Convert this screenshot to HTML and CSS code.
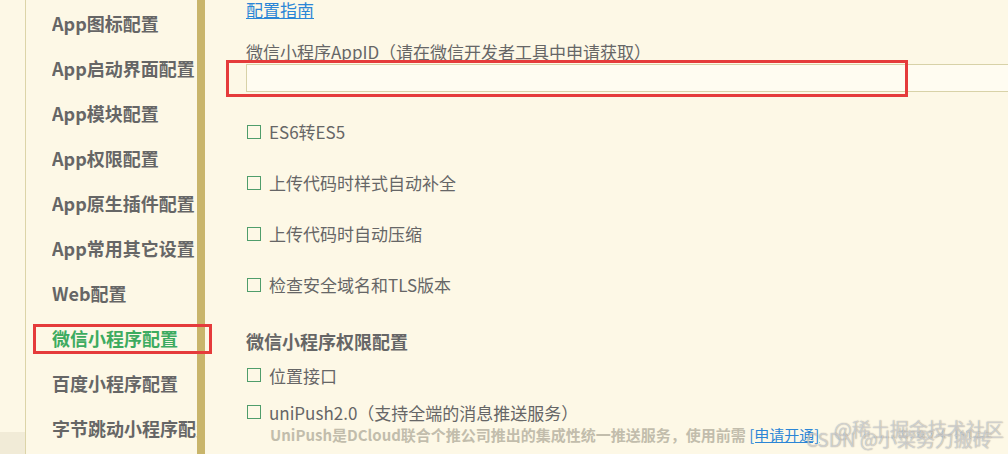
FILE: index.html
```html
<!DOCTYPE html>
<html lang="zh">
<head>
    <meta charset="UTF-8">
    <meta name="viewport" content="width=device-width, initial-scale=1.0">
    <title>manifest.json - 微信小程序配置</title>
    <link rel="stylesheet" href="styles.css">
</head>
<body>
    <div class="page">
        <div class="gutter">
            <div class="gutter-foot"></div>
        </div>

        <nav class="sidebar">
            <div class="nav-item"><span class="nav-text">App图标配置</span></div>
            <div class="nav-item"><span class="nav-text">App启动界面配置</span></div>
            <div class="nav-item"><span class="nav-text">App模块配置</span></div>
            <div class="nav-item"><span class="nav-text">App权限配置</span></div>
            <div class="nav-item"><span class="nav-text">App原生插件配置</span></div>
            <div class="nav-item"><span class="nav-text">App常用其它设置</span></div>
            <div class="nav-item"><span class="nav-text">Web配置</span></div>
            <div class="nav-item active"><span class="nav-text">微信小程序配置</span></div>
            <div class="nav-item"><span class="nav-text">百度小程序配置</span></div>
            <div class="nav-item"><span class="nav-text">字节跳动小程序配置</span></div>
        </nav>

        <main class="content">
            <a class="guide" href="#">配置指南</a>
            <div class="field-label">微信小程序AppID（请在微信开发者工具中申请获取）</div>
            <div class="field">
                <input class="text-input" type="text">
            </div>

            <ul class="options">
                <li class="option"><span class="box"></span>ES6转ES5</li>
                <li class="option"><span class="box"></span>上传代码时样式自动补全</li>
                <li class="option"><span class="box"></span>上传代码时自动压缩</li>
                <li class="option"><span class="box"></span>检查安全域名和TLS版本</li>
            </ul>

            <h3 class="section-title">微信小程序权限配置</h3>
            <div class="perm"><span class="box"></span>位置接口</div>
            <div class="perm"><span class="box"></span>uniPush2.0（支持全端的消息推送服务）</div>
            <div class="perm-desc">UniPush是DCloud联合个推公司推出的集成性统一推送服务，使用前需 <a href="#">[申请开通]</a></div>
        </main>

        <div class="watermark mark-juejin">@稀土掘金技术社区</div>
        <div class="watermark mark-csdn">CSDN @小菜努力搬砖</div>
    </div>
</body>
</html>
```

FILE: styles.css
```css
body {
    margin: 0;
    font-family: "Noto Sans CJK SC", "Noto Sans", sans-serif;
    background-color: #fdf8e6;
    color: #666;
}

.page {
    position: relative;
    display: flex;
    height: 454px;
    overflow: hidden;
}

.gutter {
    width: 25px;
    display: flex;
    flex-direction: column;
    justify-content: flex-end;
}

.gutter-foot {
    height: 22px;
    background-color: #f1ebd7;
}

.sidebar {
    width: 171px;
    flex-shrink: 0;
    border-left: 1px solid #dcd4a8;
    border-right: 8px solid #c9b56b;
    padding-top: 1px;
}

.nav-item {
    position: relative;
    padding-left: 26px;
    height: 45px;
    line-height: 45px;
    font-size: 18px;
    font-weight: bold;
    color: #666;
}

.nav-text {
    display: block;
    overflow: hidden;
    white-space: nowrap;
}

.nav-item.active {
    color: #3dab60;
}

.nav-item.active::after {
    content: "";
    position: absolute;
    left: 7px;
    top: 8px;
    width: 173px;
    height: 24px;
    border: 3px solid #e53b3b;
}

.content {
    flex: 1;
    padding-left: 41px;
    font-size: 17px;
}

.guide {
    display: block;
    line-height: 20px;
    color: #2b86d6;
    text-decoration: underline;
}

.field-label {
    margin-top: 22px;
    line-height: 20px;
}

.field {
    position: relative;
    margin-top: 2px;
}

.field::after {
    content: "";
    position: absolute;
    left: -20px;
    top: -4px;
    width: 676px;
    height: 31px;
    border: 3px solid #e53b3b;
}

.text-input {
    display: block;
    box-sizing: border-box;
    width: 100%;
    height: 28px;
    border: 1px solid #d8d2a8;
    border-right: none;
    background-color: #fffcf1;
    outline: none;
}

.options {
    list-style: none;
    margin: 14px 0 0;
    padding: 0;
}

.option,
.perm {
    display: flex;
    align-items: center;
    padding-left: 1px;
}

.option {
    height: 51px;
}

.box {
    width: 12px;
    height: 12px;
    border: 1px solid #4f9d6b;
    margin-right: 8px;
    flex-shrink: 0;
}

.section-title {
    margin: 19px 0 0;
    line-height: 24px;
    font-size: 18px;
    font-weight: bold;
    color: #666;
}

.perm {
    height: 24px;
    margin-top: 10px;
}

.perm + .perm {
    margin-top: 13px;
}

.perm-desc {
    margin-top: 1px;
    padding-left: 24px;
    line-height: 20px;
    font-size: 15px;
    font-weight: bold;
    color: #c2bdac;
    white-space: nowrap;
}

.perm-desc a {
    color: #2b86d6;
    font-weight: normal;
    text-decoration: underline;
}

.watermark {
    position: absolute;
    font-size: 19px;
    color: rgba(255, 255, 255, 0.55);
    text-shadow: 0 0 1px rgba(90, 90, 90, 0.7);
    white-space: nowrap;
}

.mark-juejin {
    left: 834px;
    top: 415px;
}

.mark-csdn {
    left: 806px;
    top: 425px;
}
```
